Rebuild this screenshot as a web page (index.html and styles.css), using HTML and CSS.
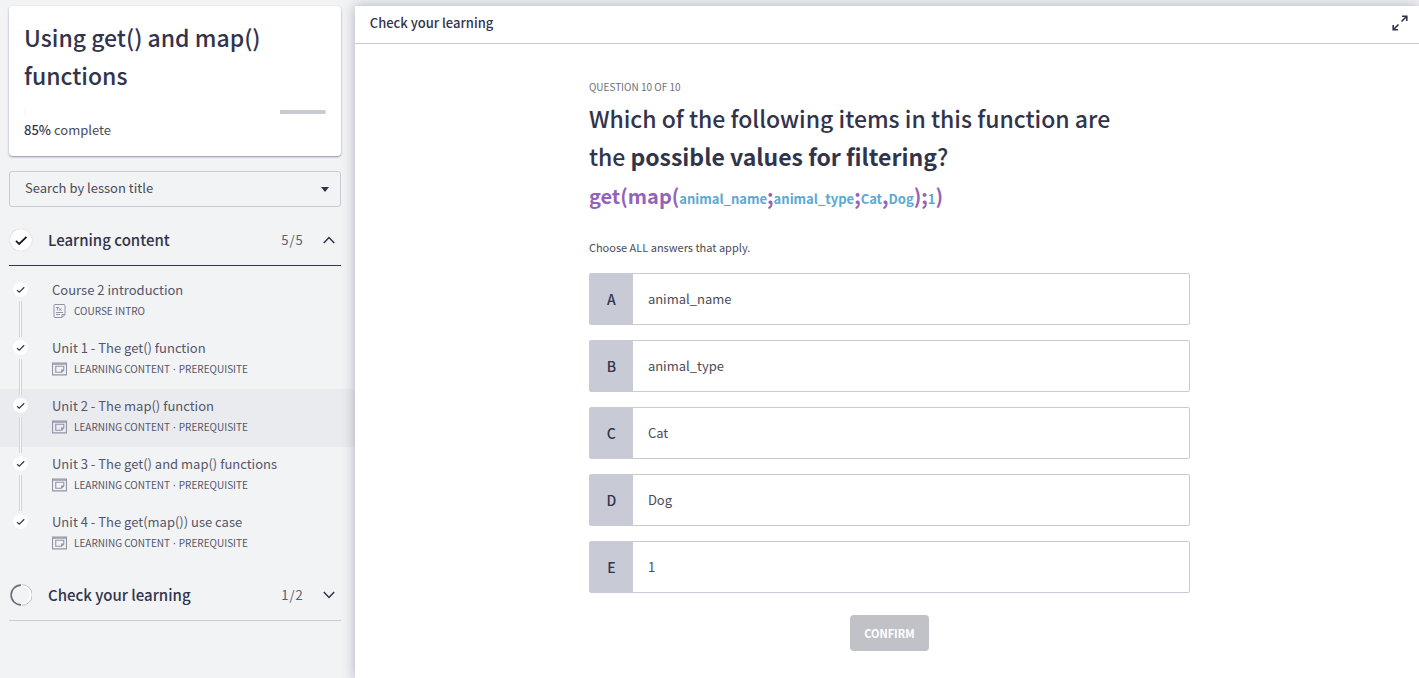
FILE: index.html
```html
<!DOCTYPE html>
<html lang="en">
<head>
<meta charset="utf-8">
<meta name="viewport" content="width=device-width, initial-scale=1">
<title>Using get() and map() functions</title>
<link rel="stylesheet" href="styles.css">
</head>
<body>
<svg class="symbols" aria-hidden="true">
  <symbol id="tick" viewBox="0 0 24 24"><path d="M6.500 13l3.500 3.300 8-7.800" fill="none" stroke="currentColor" stroke-width="2"/></symbol>
  <symbol id="content" viewBox="0 0 14 12"><path d="M.5.5h13v11H.5z" fill="none" stroke="currentColor"/><path d="M1 1.500h12" stroke="currentColor"/><path d="M3.500 3.500h7.500v3.500l-2 2H3.500zM11 7H9v2" fill="none" stroke="currentColor"/></symbol>
  <symbol id="intro" viewBox="0 0 12 14"><path d="M1.500.5h9q1 0 1 1v9l-3 3h-7q-1 0-1-1v-11q0-1 1-1zM11.500 10.500h-3v3" fill="none" stroke="currentColor"/><path d="M2.500 3.500h3M4 3.500v3M5.500 4.500l2.500 2M8 4.500l-2.500 2M2.500 8.500h7M2.500 10.500h4" fill="none" stroke="currentColor"/></symbol>
</svg>
<div class="app">
  <aside class="sidebar">
    <section class="card">
      <h1 class="course-title">Using get() and map() functions</h1>
      <progress class="progress" value="85" max="100" aria-label="Course progress"></progress>
      <p class="complete"><b>85%</b> complete</p>
    </section>
    <div class="search">
      <select class="search-select" aria-label="Search by lesson title"><option>Search by lesson title</option></select>
      <svg class="caret" viewBox="0 0 8 5" aria-hidden="true"><path d="M0 0h8L4 5z" fill="currentColor"/></svg>
    </div>
    <button class="section open" type="button" aria-expanded="true">
      <span class="section-done"><svg viewBox="0 0 24 24"><use href="#tick"/></svg></span>
      <span class="section-name">Learning content</span>
      <span class="count">5/5</span>
      <svg class="chevron" viewBox="0 0 12 8"><path d="M.8 7L6 1.500 11.200 7" fill="none" stroke="currentColor" stroke-width="1.500"/></svg>
    </button>
    <nav class="lessons" aria-label="Lessons">
      <a class="lesson" href="#">
        <span class="rail"><i class="seg"></i><svg class="done"><use href="#tick"/></svg><i class="seg grow"></i></span>
        <span class="info"><span class="name">Course 2 introduction</span><span class="kind"><svg class="kind-icon"><use href="#intro"/></svg>COURSE INTRO</span></span>
      </a>
      <a class="lesson" href="#">
        <span class="rail"><i class="seg"></i><svg class="done"><use href="#tick"/></svg><i class="seg grow"></i></span>
        <span class="info"><span class="name">Unit 1 - The get() function</span><span class="kind"><svg class="kind-icon"><use href="#content"/></svg>LEARNING CONTENT<span class="dot">·</span>PREREQUISITE</span></span>
      </a>
      <a class="lesson current" href="#">
        <span class="rail"><i class="seg"></i><svg class="done"><use href="#tick"/></svg><i class="seg grow"></i></span>
        <span class="info"><span class="name">Unit 2 - The map() function</span><span class="kind"><svg class="kind-icon"><use href="#content"/></svg>LEARNING CONTENT<span class="dot">·</span>PREREQUISITE</span></span>
      </a>
      <a class="lesson" href="#">
        <span class="rail"><i class="seg"></i><svg class="done"><use href="#tick"/></svg><i class="seg grow"></i></span>
        <span class="info"><span class="name">Unit 3 - The get() and map() functions</span><span class="kind"><svg class="kind-icon"><use href="#content"/></svg>LEARNING CONTENT<span class="dot">·</span>PREREQUISITE</span></span>
      </a>
      <a class="lesson" href="#">
        <span class="rail"><i class="seg"></i><svg class="done"><use href="#tick"/></svg><i class="seg grow"></i></span>
        <span class="info"><span class="name">Unit 4 - The get(map()) use case</span><span class="kind"><svg class="kind-icon"><use href="#content"/></svg>LEARNING CONTENT<span class="dot">·</span>PREREQUISITE</span></span>
      </a>
    </nav>
    <button class="section" type="button" aria-expanded="false">
      <svg class="ring" viewBox="0 0 24 24"><path d="M12 1.500a10.500 10.500 0 0 1 0 21" fill="none" stroke="#fff" stroke-width="2"/><path d="M13 .7a11.300 11.300 0 0 1 0 22.600" fill="none" stroke="#a9abb8" stroke-width=".8"/><path d="M12 1.200a10.800 10.800 0 0 0 0 21.600" fill="none" stroke="#6b6d80" stroke-width="1.800"/></svg>
      <span class="section-name">Check your learning</span>
      <span class="count">1/2</span>
      <svg class="chevron" viewBox="0 0 12 8"><path d="M.8 1L6 6.500 11.200 1" fill="none" stroke="currentColor" stroke-width="1.500"/></svg>
    </button>
  </aside>
  <main class="main">
    <header class="topbar">
      <h2 class="topbar-title">Check your learning</h2>
      <button class="expand" type="button" aria-label="Full screen"><svg viewBox="0 0 16 16"><path d="M9.500 6.500l5-5M10 1.200h4.800V6M6.500 9.500l-5 5M1.200 10v4.800H6" fill="none" stroke="currentColor" stroke-width="1.600"/></svg></button>
    </header>
    <form class="quiz">
      <p class="step">QUESTION 10 OF 10</p>
      <h3 class="question">Which of the following items in this function are the <b>possible values for filtering</b>?</h3>
      <p class="formula">get(map(<span class="arg">animal_name</span>;<span class="arg">animal_type</span>;<span class="arg">Cat</span>,<span class="arg">Dog</span>);<span class="arg">1</span>)</p>
      <p class="hint">Choose ALL answers that apply.</p>
      <div class="options">
        <label class="option"><input class="tickbox" type="checkbox"><span class="letter">A</span><span class="answer">animal_name</span></label>
        <label class="option"><input class="tickbox" type="checkbox"><span class="letter">B</span><span class="answer">animal_type</span></label>
        <label class="option"><input class="tickbox" type="checkbox"><span class="letter">C</span><span class="answer">Cat</span></label>
        <label class="option"><input class="tickbox" type="checkbox"><span class="letter">D</span><span class="answer">Dog</span></label>
        <label class="option"><input class="tickbox" type="checkbox"><span class="letter">E</span><span class="answer">1</span></label>
      </div>
      <button class="confirm" type="button" disabled>CONFIRM</button>
    </form>
  </main>
</div>
</body>
</html>
```
FILE: styles.css
```css
* { box-sizing: border-box; }
body {
  margin: 0;
  background: #f1f3f5;
  color: #32344b;
  font-family: "Noto Sans CJK SC", "Noto Sans", sans-serif;
  font-size: 13px;
  line-height: 20px;
}
h1, h2, h3, p { margin: 0; }
button, select { font: inherit; color: inherit; }
.symbols { display: none; }
.app { display: flex; min-height: 100vh; padding-top: 6px; }

.sidebar { flex: 0 0 25%; display: flex; flex-direction: column; }
.card {
  margin: 0 14px 15px 9px;
  padding: 12px 15px 16px;
  background: #fff;
  border-radius: 4px;
  box-shadow: 0 1px 2px rgba(50, 52, 75, .5);
}
.course-title { font-size: 23px; font-weight: 500; line-height: 38px; }
.progress {
  display: block;
  width: 100%;
  height: 4px;
  margin: 16px 0 6px;
  appearance: none;
  border: 0;
  border-radius: 2px;
  overflow: hidden;
}
.progress::-webkit-progress-bar { background: #c8cad6; }
.progress::-webkit-progress-value { background: #fff; }
.complete { color: #4b4c58; }
.complete b { font-weight: 500; color: #32344b; }

.search { display: grid; align-items: center; margin: 0 14px 8px 9px; }
.search > * { grid-area: 1 / 1; }
.search-select {
  width: 100%;
  height: 36px;
  padding: 0 15px 2px;
  appearance: none;
  background: transparent;
  border: 1px solid #c8cad6;
  border-radius: 3px;
  color: #4b4c58;
}
.caret { width: 8px; height: 5px; justify-self: end; margin-right: 12px; pointer-events: none; }

.section {
  display: flex;
  align-items: center;
  height: 51px;
  margin: 0 14px 0 9px;
  padding: 0 0 1px;
  background: none;
  border: 0;
  border-bottom: 1px solid #c8cad6;
  text-align: left;
}
.section.open { border-color: #32344b; }
.section-done, .ring { width: 22px; height: 22px; margin: 0 1px; }
.section-done { border-radius: 50%; background: #fff; color: #17181c; box-shadow: 0 0 1px rgba(50, 52, 75, .4); }
.section-done svg { display: block; }
.section-name { flex: 1; padding-left: 15px; font-size: 15px; font-weight: 500; }
.count { padding-right: 19px; font-size: 13px; letter-spacing: 1px; color: #5c5e70; }
.chevron { width: 12px; height: 8px; margin-right: 6px; }

.lessons { padding: 7px 0; }
.lesson { display: flex; height: 58px; padding-left: 13px; color: #55566b; text-decoration: none; }
.lesson.current { background: #eaebef; }
.rail { display: flex; flex-direction: column; align-items: center; width: 15px; }
.seg { width: 3px; height: 6px; border: solid #d3d4da; border-width: 0 1px; background: #fafafb; }
.seg.grow { flex: 1; }
.lesson:first-child .seg:first-child, .lesson:last-child .seg:last-child { visibility: hidden; }
.done { width: 15px; height: 15px; margin: 3px 0 4px; border-radius: 50%; background: #fff; color: #32344b; }
.info { display: flex; flex-direction: column; padding: 7px 0 0 24px; }
.kind { display: flex; align-items: center; font-size: 10px; line-height: 22px; }
.kind-icon { width: 15px; height: 14px; margin-right: 7px; color: #9294a6; }
.dot { padding: 0 3px; font-family: "Noto Sans", sans-serif; }

.main { flex: 1; min-width: 0; background: #fff; box-shadow: 0 0 12px rgba(50, 52, 75, .35); }
.topbar { display: flex; align-items: center; justify-content: space-between; height: 38px; padding: 0 11px 3px 15px; border-bottom: 1px solid #c8cad6; }
.topbar-title { font-size: 13px; font-weight: 500; }
.expand { display: flex; padding: 0; border: 0; background: none; }
.expand svg { width: 16px; height: 16px; }

.quiz { max-width: 606px; margin: 0 auto; padding: 33px 0 28px 5px; display: flex; flex-direction: column; }
.step { padding-bottom: 2px; font-size: 10px; color: #6f7077; }
.question { max-width: 540px; font-size: 23px; font-weight: 500; line-height: 38px; }
.question b { font-weight: 700; }
.formula { margin-top: 2px; font-size: 20px; font-weight: 700; line-height: 38px; color: #9263b8; }
.arg { font-size: 13px; line-height: 20px; color: #5aa9d3; }
.hint { margin: 22px 0 16px; font-size: 11px; color: #4b4c58; }
.options { display: grid; gap: 15px; }
.option { display: flex; height: 52px; border: 1px solid #c8cad6; border-radius: 2px; cursor: pointer; }
.tickbox { position: absolute; opacity: 0; }
.letter { display: flex; align-items: center; justify-content: center; width: 43px; background: #c8cad6; font-size: 14px; font-weight: 500; }
.answer { align-self: center; padding-left: 15px; color: #4b4c58; }
.confirm { align-self: center; width: 79px; height: 36px; margin-top: 22px; padding: 0; border: 0; border-radius: 4px; background: #c1c2c8; color: #fff; font-size: 11px; font-weight: 700; }
```
